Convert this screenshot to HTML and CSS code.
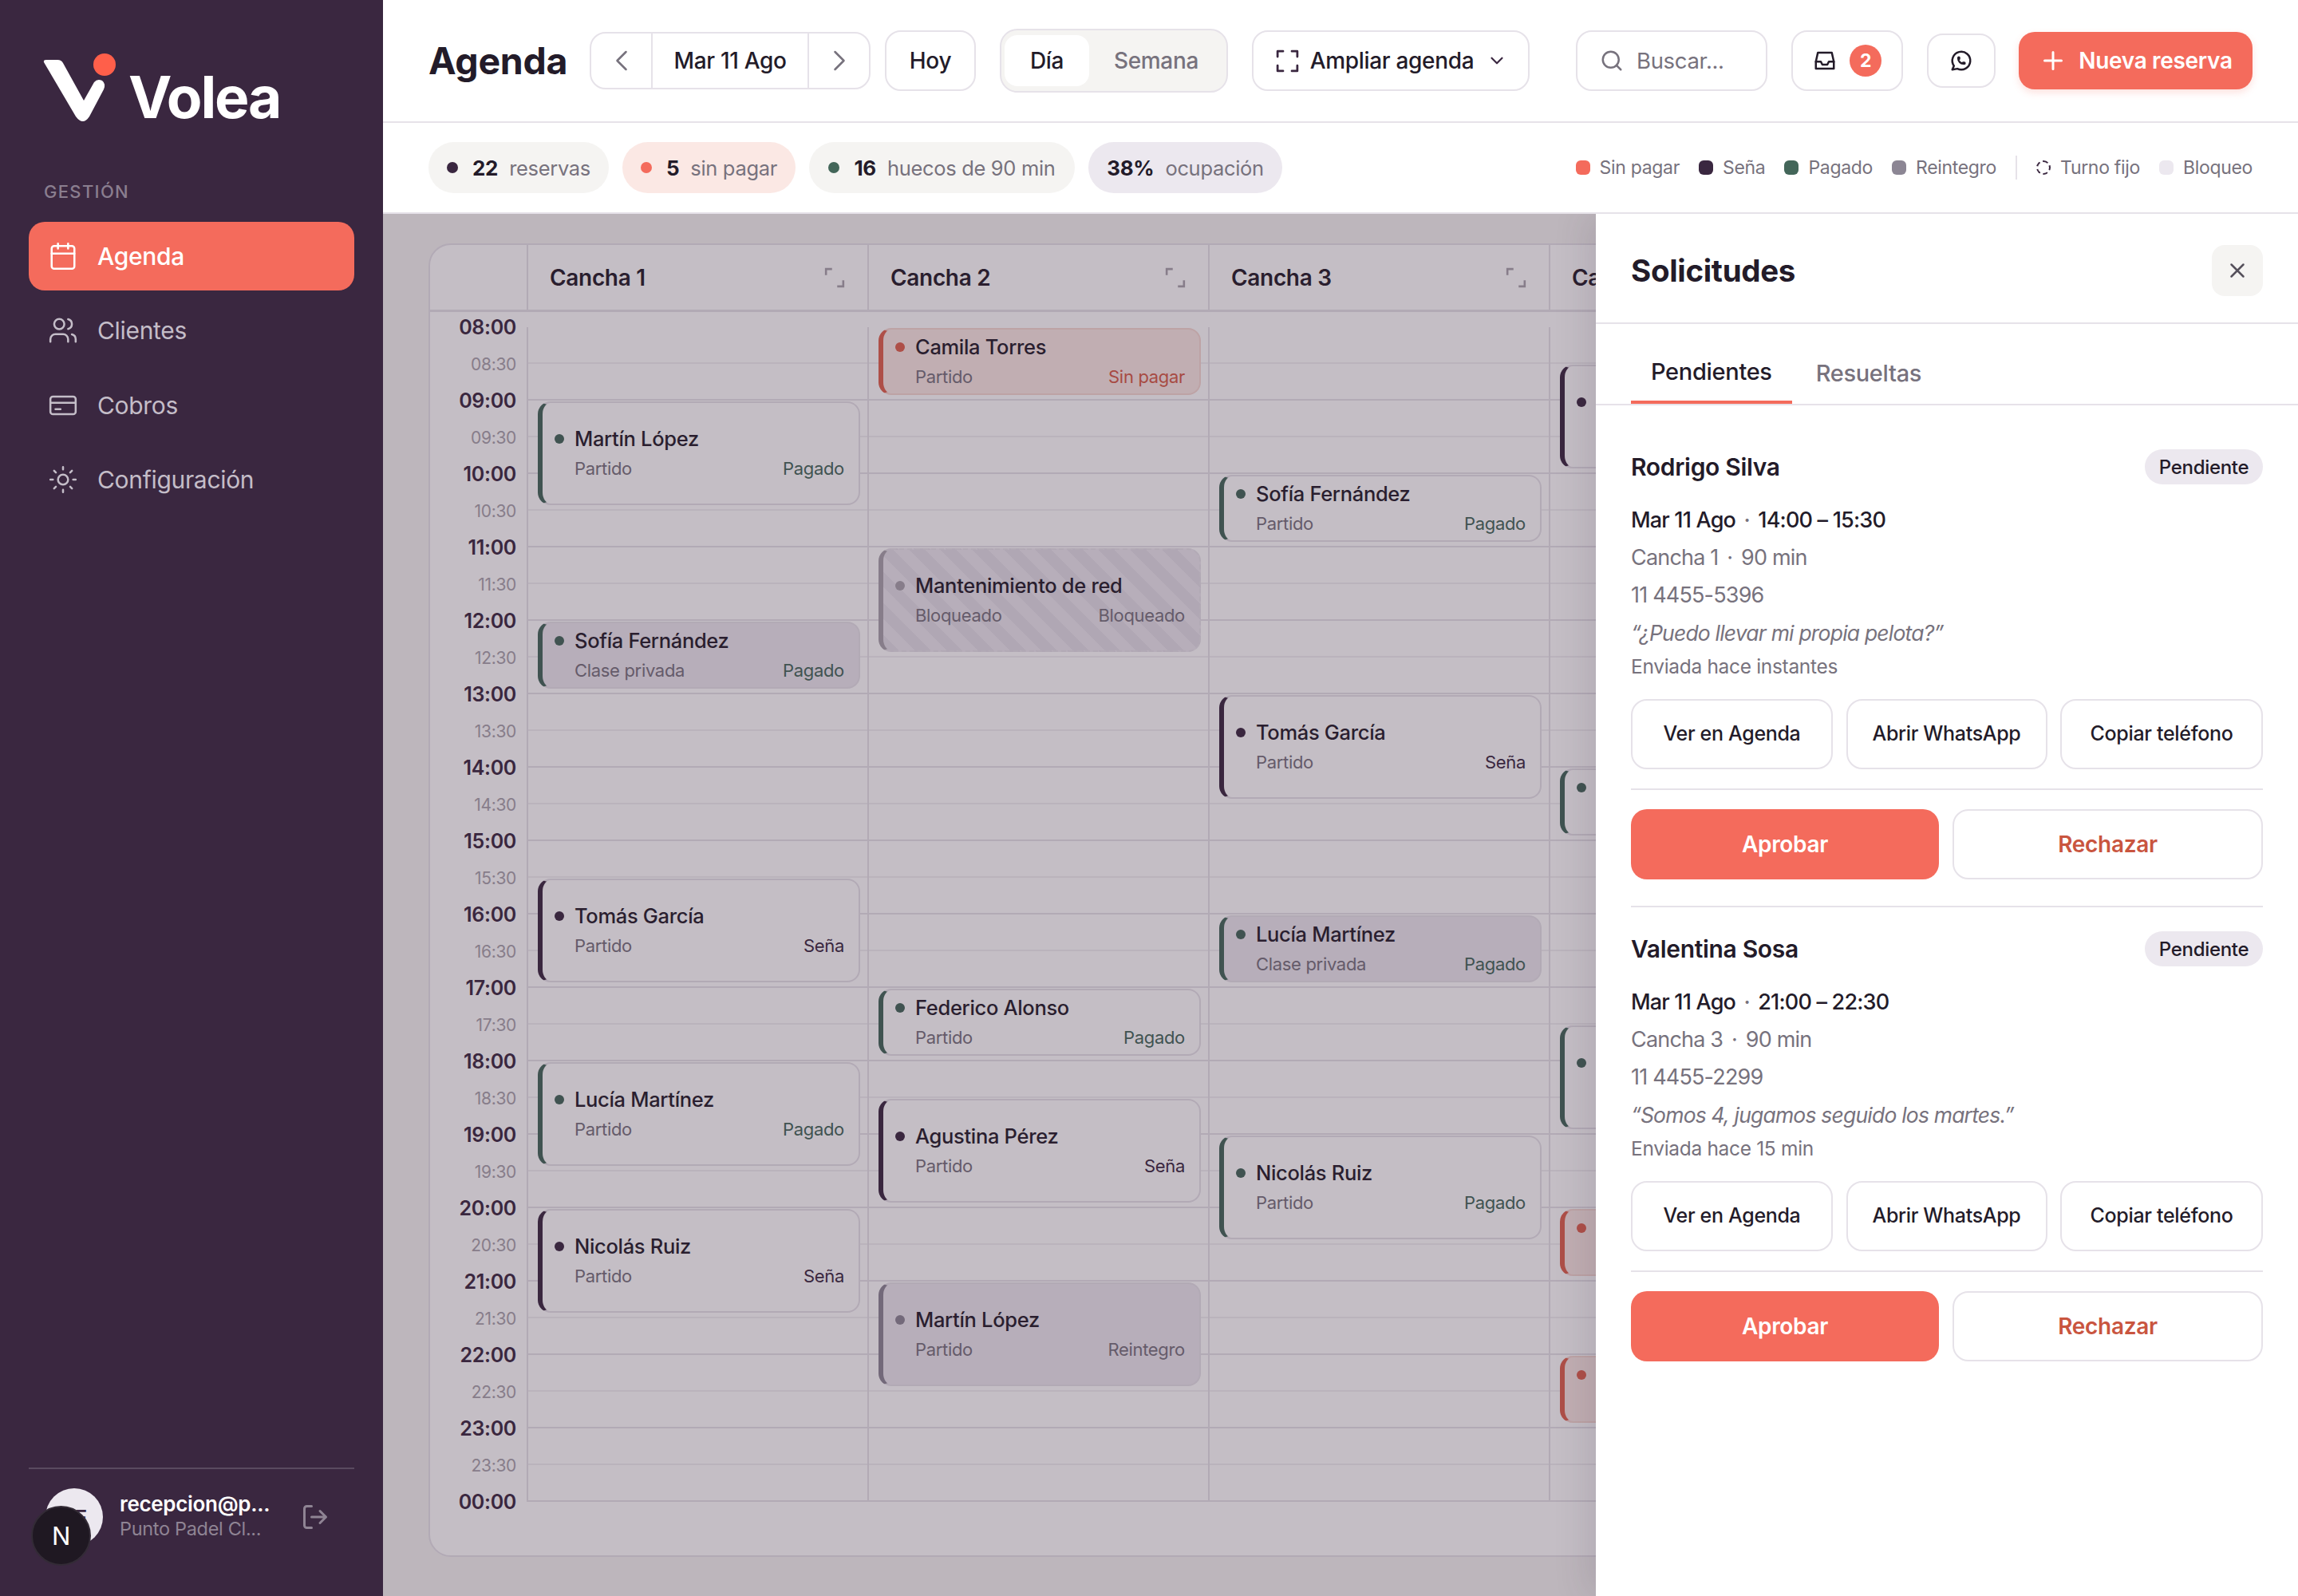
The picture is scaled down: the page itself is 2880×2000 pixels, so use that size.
FILE: index.html
```html
<!DOCTYPE html>
<html lang="es">
<head>
    <meta charset="UTF-8">
    <title>Volea - Agenda</title>
    <link rel="stylesheet" href="styles.css">
</head>
<body>
<div class="app">
    <aside class="sidebar">
        <div class="logo">
            <svg class="logo-mark" viewBox="50 70 90 90" width="90" height="90">
                <path d="M55 78 Q54 75 58 75 L72 75 Q77 75 79 79 L105 126 L118 103 Q122 98 128 101 Q133 105 130 112 L112 146 Q104 158 95 146 Z" fill="#fff" stroke="none"/>
                <circle cx="131" cy="81" r="14" fill="#ff5f4a" stroke="none"/>
            </svg>
            <span class="logo-text">Volea</span>
        </div>
        <div class="nav-label">GESTIÓN</div>
        <nav class="nav">
            <a class="nav-item active">
                <svg viewBox="0 0 24 24"><rect x="3" y="4" width="18" height="18" rx="2"/><path d="M16 2v4M8 2v4M3 10h18"/></svg>
                Agenda
            </a>
            <a class="nav-item">
                <svg viewBox="0 0 24 24"><circle cx="9" cy="7" r="4"/><path d="M16 21v-2a4 4 0 0 0-4-4H6a4 4 0 0 0-4 4v2M16 3.13a4 4 0 0 1 0 7.75M22 21v-2a4 4 0 0 0-3-3.87"/></svg>
                Clientes
            </a>
            <a class="nav-item">
                <svg viewBox="0 0 24 24"><rect x="2" y="5" width="20" height="14" rx="2"/><path d="M2 10h20M6 15h4"/></svg>
                Cobros
            </a>
            <a class="nav-item">
                <svg viewBox="0 0 24 24"><circle cx="12" cy="12" r="4"/><path d="M12 2v2M12 20v2M4.93 4.93l1.41 1.41M17.66 17.66l1.41 1.41M2 12h2M20 12h2M6.34 17.66l-1.41 1.41M19.07 4.93l-1.41 1.41"/></svg>
                Configuración
            </a>
        </nav>
        <div class="user">
            <div class="avatar">
                <span>PF</span>
                <div class="next-badge">N</div>
            </div>
            <div class="user-info">
                <div class="user-mail">recepcion@p...</div>
                <div class="user-club">Punto Padel Cl...</div>
            </div>
            <svg class="logout" viewBox="0 0 24 24"><path d="M9 21H5a2 2 0 0 1-2-2V5a2 2 0 0 1 2-2h4M16 17l5-5-5-5M21 12H9"/></svg>
        </div>
    </aside>

    <main class="main">
        <header class="topbar">
            <h1 class="title">Agenda</h1>
            <div class="date-nav">
                <span class="date-arrow"><svg viewBox="0 0 24 24"><path d="m15 18-6-6 6-6"/></svg></span>
                <span class="date-value">Mar 11 Ago</span>
                <span class="date-arrow"><svg viewBox="0 0 24 24"><path d="m9 18 6-6-6-6"/></svg></span>
            </div>
            <button class="btn btn-hoy">Hoy</button>
            <div class="toggle">
                <span class="toggle-on">Día</span>
                <span class="toggle-off">Semana</span>
            </div>
            <button class="btn btn-ampliar">
                <svg viewBox="0 0 24 24"><path d="M3 8V3h5M16 3h5v5M21 16v5h-5M8 21H3v-5"/></svg>
                Ampliar agenda
                <svg class="chev" viewBox="0 0 24 24"><path d="m6 9 6 6 6-6"/></svg>
            </button>
            <div class="search">
                <svg viewBox="0 0 24 24"><circle cx="11" cy="11" r="8"/><path d="m21 21-4.3-4.3"/></svg>
                Buscar...
            </div>
            <button class="btn btn-inbox">
                <svg viewBox="0 0 24 24"><path d="M3 13h5l1.5 3h5l1.5-3h5"/><path d="M5 4h14l2 9v7H3v-7z"/></svg>
                <span class="count">2</span>
            </button>
            <button class="btn btn-wa">
                <svg viewBox="0 0 24 24"><path d="M3 21l1.65-3.8a9 9 0 1 1 3.4 2.9L3 21"/><path d="M9 10a.5.5 0 0 0 1 0V9a.5.5 0 0 0-1 0v1a5 5 0 0 0 5 5h1a.5.5 0 0 0 0-1h-1a.5.5 0 0 0 0 1"/></svg>
            </button>
            <button class="btn-new">
                <svg viewBox="0 0 24 24"><path d="M5 12h14M12 5v14"/></svg>
                Nueva reserva
            </button>
        </header>

        <div class="statsbar">
            <div class="stats">
                <div class="stat s-reservas"><i class="dot d-sena"></i><b>22</b> reservas</div>
                <div class="stat s-sinpagar"><i class="dot d-sinpagar"></i><b>5</b> sin pagar</div>
                <div class="stat s-huecos"><i class="dot d-pagado"></i><b>16</b> huecos de 90 min</div>
                <div class="stat s-ocupacion"><b>38%</b> ocupación</div>
            </div>
            <div class="legend">
                <span class="leg"><i class="sw d-sinpagar"></i>Sin pagar</span>
                <span class="leg"><i class="sw d-sena"></i>Seña</span>
                <span class="leg"><i class="sw d-pagado"></i>Pagado</span>
                <span class="leg"><i class="sw d-reintegro"></i>Reintegro</span>
                <span class="leg-sep"></span>
                <span class="leg"><i class="sw sw-fijo"></i>Turno fijo</span>
                <span class="leg"><i class="sw sw-bloqueo"></i>Bloqueo</span>
            </div>
        </div>

        <div class="content">
            <div class="board-clip">
                <div class="board">
                    <div class="board-head">
                        <div class="corner"></div>
                        <div class="court">Cancha 1 <svg viewBox="0 0 24 24"><path d="M2 9V2h7M22 15v7h-7"/></svg></div>
                        <div class="court">Cancha 2 <svg viewBox="0 0 24 24"><path d="M2 9V2h7M22 15v7h-7"/></svg></div>
                        <div class="court">Cancha 3 <svg viewBox="0 0 24 24"><path d="M2 9V2h7M22 15v7h-7"/></svg></div>
                        <div class="court">Ca</div>
                    </div>
                    <div class="board-body">
                        <div class="times">
                            <span class="hour">08:00</span><span>08:30</span>
                            <span class="hour">09:00</span><span>09:30</span>
                            <span class="hour">10:00</span><span>10:30</span>
                            <span class="hour">11:00</span><span>11:30</span>
                            <span class="hour">12:00</span><span>12:30</span>
                            <span class="hour">13:00</span><span>13:30</span>
                            <span class="hour">14:00</span><span>14:30</span>
                            <span class="hour">15:00</span><span>15:30</span>
                            <span class="hour">16:00</span><span>16:30</span>
                            <span class="hour">17:00</span><span>17:30</span>
                            <span class="hour">18:00</span><span>18:30</span>
                            <span class="hour">19:00</span><span>19:30</span>
                            <span class="hour">20:00</span><span>20:30</span>
                            <span class="hour">21:00</span><span>21:30</span>
                            <span class="hour">22:00</span><span>22:30</span>
                            <span class="hour">23:00</span><span>23:30</span>
                            <span class="hour">00:00</span>
                        </div>

                        <div class="column">
                            <div class="event pagado" style="grid-row: 3 / span 3">
                                <div class="ev-name"><i></i>Martín López</div>
                                <div class="ev-sub"><span>Partido</span><em>Pagado</em></div>
                            </div>
                            <div class="event pagado clase" style="grid-row: 9 / span 2">
                                <div class="ev-name"><i></i>Sofía Fernández</div>
                                <div class="ev-sub"><span>Clase privada</span><em>Pagado</em></div>
                            </div>
                            <div class="event sena" style="grid-row: 16 / span 3">
                                <div class="ev-name"><i></i>Tomás García</div>
                                <div class="ev-sub"><span>Partido</span><em>Seña</em></div>
                            </div>
                            <div class="event pagado" style="grid-row: 21 / span 3">
                                <div class="ev-name"><i></i>Lucía Martínez</div>
                                <div class="ev-sub"><span>Partido</span><em>Pagado</em></div>
                            </div>
                            <div class="event sena" style="grid-row: 25 / span 3">
                                <div class="ev-name"><i></i>Nicolás Ruiz</div>
                                <div class="ev-sub"><span>Partido</span><em>Seña</em></div>
                            </div>
                        </div>

                        <div class="column">
                            <div class="event sinpagar" style="grid-row: 1 / span 2">
                                <div class="ev-name"><i></i>Camila Torres</div>
                                <div class="ev-sub"><span>Partido</span><em>Sin pagar</em></div>
                            </div>
                            <div class="event bloqueado" style="grid-row: 7 / span 3">
                                <div class="ev-name"><i></i>Mantenimiento de red</div>
                                <div class="ev-sub"><span>Bloqueado</span><em>Bloqueado</em></div>
                            </div>
                            <div class="event pagado" style="grid-row: 19 / span 2">
                                <div class="ev-name"><i></i>Federico Alonso</div>
                                <div class="ev-sub"><span>Partido</span><em>Pagado</em></div>
                            </div>
                            <div class="event sena" style="grid-row: 22 / span 3">
                                <div class="ev-name"><i></i>Agustina Pérez</div>
                                <div class="ev-sub"><span>Partido</span><em>Seña</em></div>
                            </div>
                            <div class="event reintegro" style="grid-row: 27 / span 3">
                                <div class="ev-name"><i></i>Martín López</div>
                                <div class="ev-sub"><span>Partido</span><em>Reintegro</em></div>
                            </div>
                        </div>

                        <div class="column">
                            <div class="event pagado" style="grid-row: 5 / span 2">
                                <div class="ev-name"><i></i>Sofía Fernández</div>
                                <div class="ev-sub"><span>Partido</span><em>Pagado</em></div>
                            </div>
                            <div class="event sena" style="grid-row: 11 / span 3">
                                <div class="ev-name"><i></i>Tomás García</div>
                                <div class="ev-sub"><span>Partido</span><em>Seña</em></div>
                            </div>
                            <div class="event pagado clase" style="grid-row: 17 / span 2">
                                <div class="ev-name"><i></i>Lucía Martínez</div>
                                <div class="ev-sub"><span>Clase privada</span><em>Pagado</em></div>
                            </div>
                            <div class="event pagado" style="grid-row: 23 / span 3">
                                <div class="ev-name"><i></i>Nicolás Ruiz</div>
                                <div class="ev-sub"><span>Partido</span><em>Pagado</em></div>
                            </div>
                        </div>

                        <div class="column">
                            <div class="event sena" style="grid-row: 2 / span 3">
                                <div class="ev-name"><i></i></div>
                                <div class="ev-sub"></div>
                            </div>
                            <div class="event pagado" style="grid-row: 13 / span 2">
                                <div class="ev-name"><i></i></div>
                                <div class="ev-sub"></div>
                            </div>
                            <div class="event pagado" style="grid-row: 20 / span 3">
                                <div class="ev-name"><i></i></div>
                                <div class="ev-sub"></div>
                            </div>
                            <div class="event sinpagar" style="grid-row: 25 / span 2">
                                <div class="ev-name"><i></i></div>
                                <div class="ev-sub"></div>
                            </div>
                            <div class="event sinpagar" style="grid-row: 29 / span 2">
                                <div class="ev-name"><i></i></div>
                                <div class="ev-sub"></div>
                            </div>
                        </div>
                    </div>
                </div>
            </div>

            <div class="overlay"></div>

            <section class="panel">
                <div class="panel-head">
                    <h2>Solicitudes</h2>
                    <span class="panel-close"><svg viewBox="0 0 24 24"><path d="M18 6 6 18M6 6l12 12"/></svg></span>
                </div>
                <div class="tabs">
                    <span class="tab tab-on">Pendientes</span>
                    <span class="tab">Resueltas</span>
                </div>
                <div class="requests">
                    <article class="request">
                        <div class="req-top">
                            <span class="req-name">Rodrigo Silva</span>
                            <span class="badge">Pendiente</span>
                        </div>
                        <div class="req-when">Mar 11 Ago <small>·</small> 14:00 – 15:30</div>
                        <div class="req-line">Cancha 1 <small>·</small> 90 min</div>
                        <div class="req-line">11 4455-5396</div>
                        <div class="req-line req-quote">“¿Puedo llevar mi propia pelota?”</div>
                        <div class="req-sent">Enviada hace instantes</div>
                        <div class="req-actions">
                            <button class="act">Ver en Agenda</button>
                            <button class="act">Abrir WhatsApp</button>
                            <button class="act">Copiar teléfono</button>
                        </div>
                        <div class="req-decide">
                            <button class="approve">Aprobar</button>
                            <button class="reject">Rechazar</button>
                        </div>
                    </article>
                    <article class="request">
                        <div class="req-top">
                            <span class="req-name">Valentina Sosa</span>
                            <span class="badge">Pendiente</span>
                        </div>
                        <div class="req-when">Mar 11 Ago <small>·</small> 21:00 – 22:30</div>
                        <div class="req-line">Cancha 3 <small>·</small> 90 min</div>
                        <div class="req-line">11 4455-2299</div>
                        <div class="req-line req-quote">“Somos 4, jugamos seguido los martes.”</div>
                        <div class="req-sent">Enviada hace 15 min</div>
                        <div class="req-actions">
                            <button class="act">Ver en Agenda</button>
                            <button class="act">Abrir WhatsApp</button>
                            <button class="act">Copiar teléfono</button>
                        </div>
                        <div class="req-decide">
                            <button class="approve">Aprobar</button>
                            <button class="reject">Rechazar</button>
                        </div>
                    </article>
                </div>
            </section>
        </div>
    </main>
</div>
</body>
</html>
```

FILE: styles.css
```css
* {
    margin: 0;
    padding: 0;
    box-sizing: border-box;
}

body {
    font-family: "Inter", "Liberation Sans", sans-serif;
    color: #231b29;
    background: #fff;
    letter-spacing: -0.02em;
}

button {
    font-family: inherit;
    letter-spacing: inherit;
    background: none;
    cursor: pointer;
}

svg {
    fill: none;
    stroke: currentColor;
    stroke-width: 2;
    stroke-linecap: round;
    stroke-linejoin: round;
    flex: none;
}

.app {
    display: flex;
    height: 2000px;
    overflow: hidden;
}

/* sidebar */

.sidebar {
    width: 480px;
    flex: none;
    background: #3a2740;
    color: #fff;
    display: flex;
    flex-direction: column;
    padding: 0 36px;
}

.logo {
    display: flex;
    align-items: center;
    height: 90px;
    margin-top: 70px;
    padding-left: 14px;
}

.logo-mark {
    overflow: visible;
}

.logo-text {
    font-size: 73px;
    font-weight: 700;
    letter-spacing: -0.03em;
    margin-left: 21px;
    margin-top: 12px;
}

.nav-label {
    font-size: 22px;
    font-weight: 500;
    letter-spacing: 0.06em;
    color: #8a7e8f;
    padding-left: 19px;
    margin-top: 67px;
    line-height: 26px;
}

.nav {
    margin-top: 25px;
    display: flex;
    flex-direction: column;
    gap: 7.3px;
}

.nav-item {
    height: 86px;
    border-radius: 20px;
    display: flex;
    align-items: center;
    gap: 24px;
    padding-left: 24px;
    font-size: 30px;
    color: #c4bdc8;
}

.nav-item svg {
    width: 38px;
    height: 38px;
    stroke-width: 1.6;
}

.nav-item.active {
    background: #f46b5c;
    color: #fff;
    font-weight: 500;
}

.user {
    margin-top: auto;
    border-top: 2px solid #5a4a60;
    height: 161px;
    display: flex;
    align-items: flex-start;
    padding: 24px 0 0 21px;
}

.avatar {
    width: 72px;
    height: 72px;
    border-radius: 50%;
    background: #ece8ef;
    color: #3a2740;
    font-size: 26px;
    font-weight: 600;
    display: flex;
    align-items: center;
    justify-content: center;
    flex: none;
    position: relative;
}

.next-badge {
    position: absolute;
    left: -18px;
    top: 22px;
    width: 75px;
    height: 75px;
    border-radius: 50%;
    background: #1f1822;
    border: 2px solid #332b36;
    color: #fff;
    font-size: 31px;
    font-weight: 400;
    display: flex;
    align-items: center;
    justify-content: center;
}

.user-info {
    margin-left: 21px;
    width: 205px;
    white-space: nowrap;
    margin-top: 3px;
}

.user-mail {
    font-size: 26px;
    font-weight: 600;
    line-height: 34px;
}

.user-club {
    font-size: 23.5px;
    color: #8f8494;
    line-height: 28px;
}

.logout {
    width: 36px;
    height: 36px;
    color: #8f8494;
    margin-left: 22px;
    margin-top: 18px;
}

/* top bar */

.main {
    flex: 1;
    min-width: 0;
    display: flex;
    flex-direction: column;
}

.topbar {
    height: 154px;
    flex: none;
    border-bottom: 2px solid #e6e2e9;
    display: flex;
    align-items: center;
    padding: 0 57px;
}

.title {
    font-size: 46.5px;
    font-weight: 700;
    width: 171px;
    margin-right: 31px;
    white-space: nowrap;
}

.date-nav {
    width: 352px;
    height: 72px;
    border: 2px solid #e6e2e9;
    border-radius: 20px;
    display: flex;
    align-items: center;
    margin-right: 18px;
}

.date-arrow {
    width: 75px;
    height: 100%;
    display: flex;
    align-items: center;
    justify-content: center;
    color: #77727d;
}

.date-arrow svg {
    width: 44px;
    height: 44px;
    stroke-width: 1.4;
}

.date-value {
    flex: 1;
    height: 100%;
    border-left: 2px solid #e6e2e9;
    border-right: 2px solid #e6e2e9;
    font-size: 28px;
    font-weight: 500;
    display: flex;
    align-items: center;
    justify-content: center;
    white-space: nowrap;
}

.btn {
    height: 76px;
    border: 2px solid #e6e2e9;
    border-radius: 20px;
    font-size: 28px;
    font-weight: 500;
    color: #231b29;
    display: flex;
    align-items: center;
    justify-content: center;
    white-space: nowrap;
}

.btn-hoy {
    width: 114px;
    margin-right: 30px;
}

.toggle {
    width: 286px;
    height: 80px;
    background: #f5f4f2;
    border: 2px solid #e6e2e9;
    border-radius: 22px;
    display: flex;
    align-items: center;
    padding: 0 4px;
    margin-right: 30px;
    font-size: 28px;
}

.toggle-on {
    width: 106px;
    height: 64px;
    background: #fff;
    border-radius: 16px;
    display: flex;
    align-items: center;
    justify-content: center;
    font-weight: 500;
}

.toggle-off {
    flex: 1;
    text-align: center;
    color: #77727d;
    font-weight: 500;
}

.btn-ampliar {
    width: 348px;
    gap: 12px;
    margin-right: 58px;
}

.btn-ampliar svg {
    width: 33px;
    height: 33px;
    color: #3a2740;
}

.btn-ampliar .chev {
    width: 26px;
    height: 26px;
    margin-left: 4px;
}

.search {
    width: 240px;
    height: 76px;
    border: 2px solid #e6e2e9;
    border-radius: 20px;
    display: flex;
    align-items: center;
    gap: 16px;
    padding-left: 28px;
    font-size: 27.5px;
    color: #77727d;
    margin-right: 30px;
}

.search svg {
    width: 30px;
    height: 30px;
}

.btn-inbox {
    width: 140px;
    gap: 16px;
    margin-right: 30px;
}

.btn-inbox svg {
    width: 30px;
    height: 30px;
}

.count {
    width: 40px;
    height: 40px;
    border-radius: 50%;
    background: #f46b5c;
    color: #fff;
    font-size: 23px;
    font-weight: 700;
    display: flex;
    align-items: center;
    justify-content: center;
}

.btn-wa {
    width: 86px;
    height: 68px;
    margin-right: 29px;
}

.btn-wa svg {
    width: 30px;
    height: 30px;
}

.btn-new {
    width: 293px;
    height: 72px;
    border: 0;
    border-radius: 20px;
    background: #f46b5c;
    color: #fff;
    font-size: 28px;
    font-weight: 600;
    display: flex;
    align-items: center;
    justify-content: center;
    gap: 14px;
    white-space: nowrap;
    box-shadow: 0 4px 10px rgba(244, 107, 92, 0.2);
}

.btn-new svg {
    width: 36px;
    height: 36px;
}

/* stats + legend */

.statsbar {
    height: 114px;
    flex: none;
    border-bottom: 2px solid #e6e2e9;
    display: flex;
    align-items: center;
    justify-content: space-between;
    padding: 0 57px;
}

.stats {
    display: flex;
    gap: 17px;
}

.stat {
    height: 64px;
    border-radius: 32px;
    display: flex;
    align-items: center;
    justify-content: center;
    gap: 14px;
    font-size: 25.5px;
    color: #77727d;
    white-space: nowrap;
    background: #f5f4f2;
}

.stat b {
    font-weight: 700;
    font-size: 26px;
    color: #231b29;
}

.s-reservas { width: 226px; }
.s-sinpagar { width: 217px; background: #fbe8e4; }
.s-huecos { width: 333px; }
.s-ocupacion { width: 243px; background: #ece8ef; }

.dot {
    width: 14px;
    height: 14px;
    border-radius: 50%;
    margin-right: 4px;
}

.d-sena { background: #3a2740; }
.d-sinpagar { background: #f46b5c; }
.d-pagado { background: #436659; }
.d-reintegro { background: #8c8694; }

.legend {
    display: flex;
    align-items: center;
    gap: 24px;
    font-size: 23px;
    color: #77727d;
    white-space: nowrap;
}

.leg {
    display: flex;
    align-items: center;
    gap: 12px;
}

.sw {
    width: 18px;
    height: 18px;
    border-radius: 6px;
}

.sw-fijo {
    border: 2px dashed #3a2740;
    border-radius: 50%;
}

.sw-bloqueo {
    background: #ece8ef;
}

.leg-sep {
    width: 2px;
    height: 30px;
    background: #e6e2e9;
}

/* board */

.content {
    flex: 1;
    position: relative;
    overflow: hidden;
    background: #f5f4f3;
    padding: 37px 0 50px 57px;
}

.board-clip {
    width: 1463px;
    overflow: hidden;
}

.board {
    width: 2400px;
    height: 1646px;
    background: #fff;
    border: 2px solid #e6e2e9;
    border-radius: 28px;
    overflow: hidden;
}

.board-head {
    display: grid;
    grid-template-columns: 123px repeat(4, 427px);
    height: 84px;
    border-bottom: 3px solid #e6e2e9;
}

.corner,
.court {
    border-right: 2px solid #e6e2e9;
}

.court {
    display: flex;
    align-items: center;
    justify-content: space-between;
    padding: 0 28px 0 27px;
    font-size: 28px;
    font-weight: 600;
    white-space: nowrap;
}

.court svg {
    width: 26px;
    height: 26px;
    color: #a8a3ab;
    stroke-linecap: butt;
    stroke-linejoin: miter;
    stroke-width: 2.4;
}

.board-body {
    display: grid;
    grid-template-columns: 123px repeat(4, 427px);
    align-items: start;
    padding-top: 19px;
}

.times {
    display: grid;
    grid-auto-rows: 46px;
    margin-top: -23px;
    text-align: right;
    padding-right: 15px;
    font-size: 21px;
    color: #a8a3ab;
}

.times span {
    line-height: 48px;
}

.times .hour {
    font-size: 25px;
    font-weight: 600;
    color: #3a2740;
    line-height: 46px;
}

.column {
    display: grid;
    grid-template-rows: repeat(32, 46px);
    width: 429px;
    margin-left: -2px;
    border-left: 2px solid #e6e2e9;
    background-image: repeating-linear-gradient(transparent 0, transparent 44px, #f1eff3 44px, #f1eff3 46px, transparent 46px, transparent 90px, #e6e2e9 90px, #e6e2e9 92px);
}

.event {
    margin: 1px 11px 7px 12px;
    border: 2px solid #e6e2e9;
    border-left: 6px solid;
    border-radius: 16px;
    background: #fff;
    padding: 0 18px 0 15px;
    display: flex;
    flex-direction: column;
    justify-content: center;
    gap: 8px;
    min-width: 0;
    min-height: 0;
    overflow: hidden;
}

.ev-name {
    font-size: 25.5px;
    font-weight: 500;
    display: flex;
    align-items: center;
    gap: 13px;
    height: 30px;
    line-height: 30px;
    white-space: nowrap;
}

.ev-name i {
    width: 12px;
    height: 12px;
    border-radius: 50%;
    flex: none;
    background: currentColor;
}

.ev-sub {
    font-size: 22px;
    height: 28px;
    line-height: 28px;
    color: #77727d;
    display: flex;
    justify-content: space-between;
    padding-left: 25px;
}

.ev-sub em {
    font-style: normal;
}

.pagado { border-left-color: #436659; }
.pagado .ev-name i { background: #436659; }
.pagado em { color: #436659; }

.clase { background: #ece8ef; }

.sena { border-left-color: #3a2740; }
.sena .ev-name i { background: #3a2740; }
.sena em { color: #3a2740; }

.sinpagar {
    border-left-color: #e0604c;
    background: #fbe8e4;
    border-top-color: #f5d8d2;
    border-right-color: #f5d8d2;
    border-bottom-color: #f5d8d2;
}
.sinpagar .ev-name i { background: #e0604c; }
.sinpagar em { color: #d65a46; }

.reintegro {
    border-left-color: #8c8694;
    background: #ece8ef;
}
.reintegro .ev-name i { background: #8c8694; }
.reintegro em { color: #77727d; }

.bloqueado {
    border-left-color: #a8a3ab;
    background: repeating-linear-gradient(45deg, #e3dfe7 0, #e3dfe7 14px, #ece9ef 14px, #ece9ef 28px);
    border-style: dashed;
    border-left-style: solid;
}
.bloqueado .ev-name i { background: #a8a3ab; }
.bloqueado em { color: #77727d; }

.overlay {
    position: absolute;
    inset: 0;
    background: rgba(58, 39, 64, 0.3);
}

/* panel */

.panel {
    position: absolute;
    top: 0;
    right: 0;
    bottom: 0;
    width: 880px;
    background: #fff;
    box-shadow: -12px 0 40px rgba(58, 39, 64, 0.12);
}

.panel-head {
    height: 138px;
    padding: 6px 44px 0;
    border-bottom: 2px solid #e6e2e9;
    display: flex;
    align-items: center;
    justify-content: space-between;
}

.panel-head h2 {
    font-size: 38.5px;
    font-weight: 700;
}

.panel-close {
    width: 64px;
    height: 64px;
    border-radius: 16px;
    background: #f5f4f2;
    display: flex;
    align-items: center;
    justify-content: center;
    color: #55505b;
}

.panel-close svg {
    width: 30px;
    height: 30px;
}

.tabs {
    height: 102px;
    border-bottom: 2px solid #e6e2e9;
    display: flex;
    padding: 0 44px;
}

.tab {
    height: 100px;
    padding: 22px 25px 0;
    margin-right: 5px;
    font-size: 29px;
    font-weight: 500;
    color: #77727d;
    display: flex;
    align-items: center;
}

.tab-on {
    color: #231b29;
    border-bottom: 4px solid #f46b5c;
}

.requests {
    padding: 0 44px;
}

.request {
    padding-top: 55px;
    padding-bottom: 33px;
    border-bottom: 2px solid #e6e2e9;
}

.request + .request {
    padding-top: 30px;
    border-bottom: 0;
}

.req-top {
    display: flex;
    align-items: center;
    justify-content: space-between;
    height: 44px;
}

.req-name {
    font-size: 30px;
    font-weight: 600;
}

.badge {
    width: 148px;
    height: 44px;
    border-radius: 22px;
    background: #ece8ef;
    font-size: 24px;
    font-weight: 500;
    display: flex;
    align-items: center;
    justify-content: center;
}

.req-when {
    font-size: 27px;
    font-weight: 500;
    letter-spacing: -0.03em;
    margin-top: 25px;
    line-height: 40px;
}

.req-when small,
.req-line small {
    font-size: inherit;
    color: #77727d;
    margin: 0 4px;
}

.req-line {
    font-size: 27px;
    letter-spacing: -0.03em;
    color: #77727d;
    line-height: 40px;
    margin-top: 7px;
}

.req-quote {
    font-size: 26.5px;
    font-style: italic;
}

.req-sent {
    font-size: 24.5px;
    color: #77727d;
    line-height: 30px;
    margin-top: 7px;
}

.req-actions {
    display: grid;
    grid-template-columns: 253px 252px 254px;
    justify-content: space-between;
    margin-top: 26px;
    padding-bottom: 24px;
    border-bottom: 2px solid #e6e2e9;
}

.act {
    height: 88px;
    padding-bottom: 3px;
    border: 2px solid #e6e2e9;
    border-radius: 20px;
    font-size: 25px;
    font-weight: 500;
    color: #231b29;
    white-space: nowrap;
}

.req-decide {
    display: grid;
    grid-template-columns: 386px 389px;
    justify-content: space-between;
    margin-top: 24px;
}

.approve,
.reject {
    height: 88px;
    border-radius: 20px;
    font-size: 28px;
    font-weight: 600;
}

.approve {
    border: 0;
    background: #f46b5c;
    color: #fff;
}

.reject {
    border: 2px solid #e6e2e9;
    color: #c9553f;
}
```
